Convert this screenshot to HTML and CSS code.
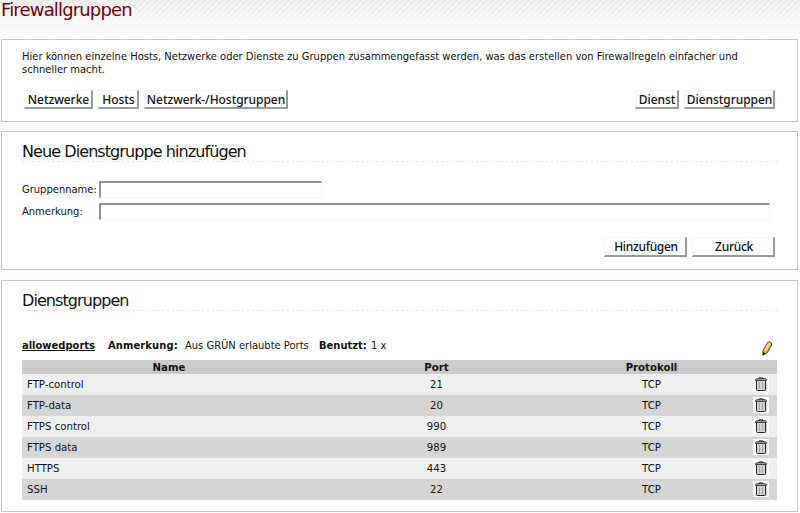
FILE: index.html
```
<!DOCTYPE html>
<html lang="de">
<head>
<meta charset="utf-8">
<title>Firewallgruppen</title>
<link rel="stylesheet" href="styles.css">
</head>
<body>
<svg class="defs" width="0" height="0" aria-hidden="true">
  <symbol id="trash" viewBox="0 0 16 16">
    <rect width="16" height="16" fill="#fbfbfb"/>
    <path d="M13.500 6v8.500H5" fill="none" stroke="#d4d4d4"/>
    <path d="M6 1.500h4" stroke="#777"/>
    <path d="M3.500 4.500h9v9q0 1-1 1h-7q-1 0-1-1z" fill="#d6d4d0" stroke="#222"/>
    <path d="M6.500 6v7M9.500 6v7" stroke="#a5a39f"/>
    <path d="M2.500 4.500v-1l2-1h7l2 1v1z" fill="#999" stroke="#444"/>
  </symbol>
</svg>
<h1>Firewallgruppen</h1>
<section class="box intro">
  <p>Hier können einzelne Hosts, Netzwerke oder Dienste zu Gruppen zusammengefasst werden, was das erstellen von Firewallregeln einfacher und<br>schneller macht.</p>
  <div class="actions">
    <button class="w69">Netzwerke</button>
    <button class="w41">Hosts</button>
    <button class="w144">Netzwerk-/Hostgruppen</button>
    <button class="w44 push">Dienst</button>
    <button class="w91">Dienstgruppen</button>
  </div>
</section>
<section class="box create">
  <h2>Neue Dienstgruppe hinzufügen</h2>
  <form>
    <label for="name">Gruppenname:</label><input id="name" class="short">
    <label for="remark">Anmerkung:</label><input id="remark">
  </form>
  <div class="submit"><button type="button">Hinzufügen</button><button type="button">Zurück</button></div>
</section>
<section class="box groups">
  <h2>Dienstgruppen</h2>
  <div class="caption">
    <b class="group">allowedports</b><b class="key">Anmerkung:</b><span class="remark">Aus GRÜN erlaubte Ports</span><b class="used">Benutzt:</b><span>1 x</span>
    <svg class="pencil" width="12" height="16" viewBox="0 0 12 16">
      <path d="M2 9.500L6.500 1.500Q9-.2 10.500 2L10.500 4 6 12 2 14z" fill="#e9b93d" stroke="#3a2b0c" stroke-width=".9"/>
      <path d="M4 9.500L8 2.500" stroke="#ffe08a" stroke-width="1.800"/>
      <path d="M7.500 2L10 3.500" stroke="#d8cda8"/>
      <path d="M1.500 15l.5-4L4.500 12.500z" fill="#222"/>
    </svg>
  </div>
  <table>
    <thead><tr><th class="c1">Name</th><th class="c2">Port</th><th class="c3">Protokoll</th><th class="c4"></th></tr></thead>
    <tbody>
      <tr><td>FTP-control</td><td>21</td><td>TCP</td><td><svg class="trash"><use href="#trash"/></svg></td></tr>
      <tr><td>FTP-data</td><td>20</td><td>TCP</td><td><svg class="trash"><use href="#trash"/></svg></td></tr>
      <tr><td>FTPS control</td><td>990</td><td>TCP</td><td><svg class="trash"><use href="#trash"/></svg></td></tr>
      <tr><td>FTPS data</td><td>989</td><td>TCP</td><td><svg class="trash"><use href="#trash"/></svg></td></tr>
      <tr><td>HTTPS</td><td>443</td><td>TCP</td><td><svg class="trash"><use href="#trash"/></svg></td></tr>
      <tr><td>SSH</td><td>22</td><td>TCP</td><td><svg class="trash"><use href="#trash"/></svg></td></tr>
    </tbody>
  </table>
</section>
</body>
</html>
```
FILE: styles.css
```
* { box-sizing: border-box; }
body {
  margin: 0;
  padding: 0 1px;
  height: 513px;
  overflow: hidden;
  font: 11.07px/13px "DejaVu Sans Condensed", "DejaVu Sans", sans-serif;
  font-stretch: condensed;
  color: #111;
  background:
    linear-gradient(rgba(255,255,255,.1), #fdfdfd 36px),
    repeating-linear-gradient(135deg, #e6e6e6 0 2.1px, #f1f1f1 2.1px 4.24px);
}
.defs { position: absolute; }
h1, h2, p { margin: 0; font-weight: normal; }
h1, h2 { font-family: "DejaVu Sans", sans-serif; font-stretch: normal; }
h1 { height: 39px; font-size: 18px; line-height: 20px; letter-spacing: -.84px; color: #6d0414; }
.box { width: 797px; border: 1px solid #c5c5c5; padding: 0 19px 0 20px; background: #fff; }
.intro { height: 83px; padding-top: 10px; }
.create { height: 139px; margin-top: 9px; padding-top: 10px; }
.groups { height: 232px; margin-top: 10px; padding-top: 10px; }
.actions { display: flex; gap: 5px; margin-top: 14px; padding: 0 3px 0 2px; }
button {
  height: 19px;
  padding: 0 0 0 1px;
  background: #fff;
  border: solid #f6f6f6;
  border-width: 1px 2px 2px 1px;
  border-right-color: #999;
  border-bottom-color: #999;
  font: 500 12px/15px "Noto Sans", sans-serif;
  letter-spacing: -.05px;
  color: #111;
  white-space: nowrap;
}
.w69 { width: 69px; }
.w41 { width: 41px; }
.w144 { width: 144px; }
.w44 { width: 44px; }
.w91 { width: 91px; }
.push { margin-left: auto; }
h2 { height: 20px; font-size: 16px; line-height: 19px; letter-spacing: -.92px; border-bottom: 1px dashed #e8e8e8; }
form { display: grid; grid-template-columns: 77px 671px; row-gap: 5px; margin-top: 19px; align-items: center; }
input {
  width: 671px;
  height: 17px;
  border: solid #f6f6f6;
  border-width: 2px 1px 1px 2px;
  border-top-color: #909090;
  border-left-color: #909090;
  padding: 0;
}
.short { width: 223px; }
.submit { display: flex; justify-content: flex-end; gap: 5px; margin: 17px 3px 0 0; }
.submit button { width: 83px; height: 20px; padding-left: 2px; letter-spacing: -.3px; }
.caption { display: flex; align-items: center; height: 20px; margin-top: 24px; }
.group { width: 86px; text-decoration: underline; }
.key { width: 77px; letter-spacing: .1px; }
.remark { width: 134px; }
.used { width: 52px; }
.caption span, .caption b { white-space: nowrap; }
.pencil { margin: 7px 5px 0 auto; }
table { width: 755px; margin-top: 5px; border-collapse: collapse; table-layout: fixed; font-size: 11.3px; }
th { height: 14px; padding: 1px 0 0; background: #cbcbcb; line-height: 13px; }
td { height: 21px; padding: 0; text-align: center; line-height: 21px; background: #efefef; }
td:first-child { text-align: left; padding-left: 5px; }
tr:nth-child(even) td { background: #d5d5d5; }
.c1 { width: 294px; }
.c2 { width: 241px; }
.c3 { width: 189px; }
.c4 { width: 31px; }
.trash { display: block; width: 16px; height: 16px; margin: -1px 0 0 7px; }
```
